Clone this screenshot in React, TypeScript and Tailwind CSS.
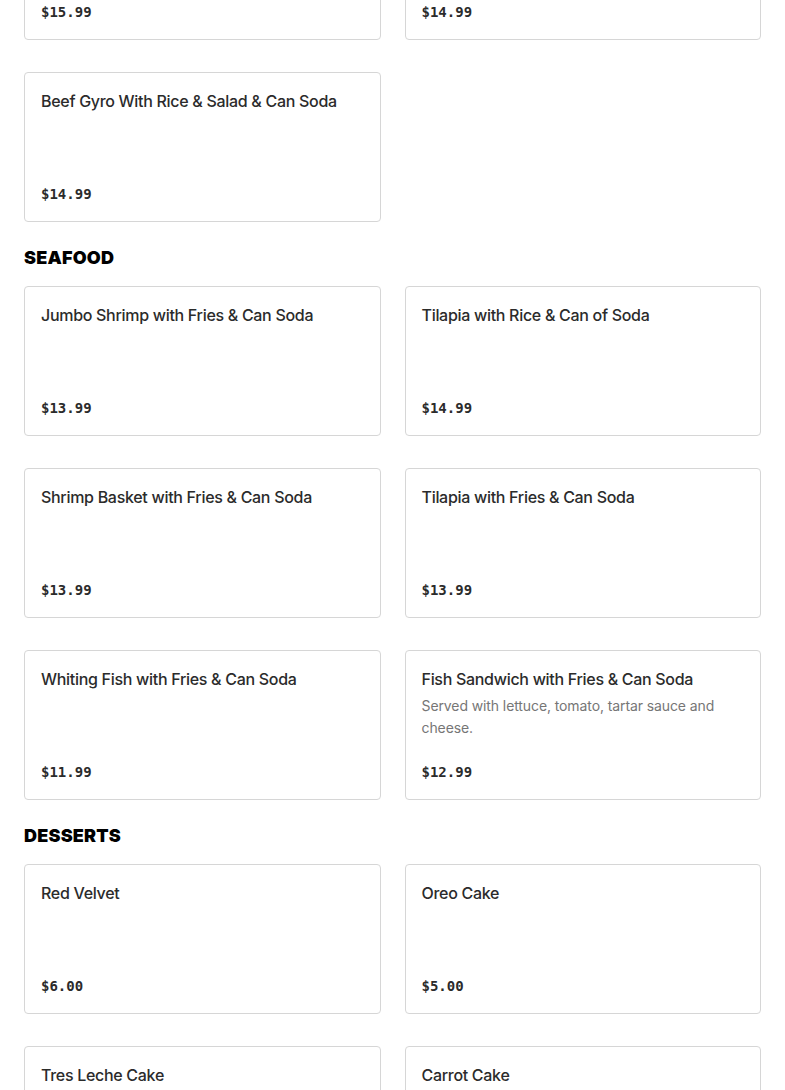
import React from "react";

type Item = { name: string; price: string; desc?: string };

const sections: { title?: string; items: Item[] }[] = [
  {
    items: [
      { name: "Chicken Gyro With Rice & Salad & Can Soda", price: "$15.99" },
      { name: "Lamb Gyro With Rice & Salad & Can Soda", price: "$14.99" },
      { name: "Beef Gyro With Rice & Salad & Can Soda", price: "$14.99" },
    ],
  },
  {
    title: "SEAFOOD",
    items: [
      { name: "Jumbo Shrimp with Fries & Can Soda", price: "$13.99" },
      { name: "Tilapia with Rice & Can of Soda", price: "$14.99" },
      { name: "Shrimp Basket with Fries & Can Soda", price: "$13.99" },
      { name: "Tilapia with Fries & Can Soda", price: "$13.99" },
      { name: "Whiting Fish with Fries & Can Soda", price: "$11.99" },
      {
        name: "Fish Sandwich with Fries & Can Soda",
        price: "$12.99",
        desc: "Served with lettuce, tomato, tartar sauce and cheese.",
      },
    ],
  },
  {
    title: "DESSERTS",
    items: [
      { name: "Red Velvet", price: "$6.00" },
      { name: "Oreo Cake", price: "$5.00" },
      { name: "Tres Leche Cake", price: "$6.00" },
      { name: "Carrot Cake", price: "$6.00" },
    ],
  },
];

function Card({ item }: { item: Item }) {
  return (
    <div className="flex h-[150px] flex-col rounded-[4px] border border-[#d6d6d6] bg-white px-4 pt-4 pb-[15px]">
      <div className="text-[16px] leading-6 font-medium text-[#2b2b2b] [font-family:Inter,sans-serif] tracking-[-0.3px]">
        {item.name}
      </div>
      {item.desc && (
        <div className="mt-1 w-[300px] text-[14px] leading-[22px] text-[#767676] [font-family:Inter,sans-serif] tracking-[-0.1px]">
          {item.desc}
        </div>
      )}
      <div className="mt-auto text-[14px] leading-6 text-[#2b2b2b] [font-family:'DejaVu_Sans_Mono',monospace] font-bold">
        {item.price}
      </div>
    </div>
  );
}

export default function App() {
  return (
    <div className="min-h-[1090px] bg-white px-6 overflow-hidden">
      <div className="-mt-[110px] flex flex-col">
        {sections.map((s, i) => (
          <div key={i} className={i > 0 ? "mt-[22px]" : ""}>
            {s.title && (
              <h2 className="mb-[14px] text-[18px] leading-7 font-black text-black [font-family:Inter,sans-serif] tracking-[0.2px]">
                {s.title}
              </h2>
            )}
            <div className="grid grid-cols-2 gap-x-6 gap-y-8">
              {s.items.map((it, j) => (
                <Card key={j} item={it} />
              ))}
            </div>
          </div>
        ))}
      </div>
    </div>
  );
}
